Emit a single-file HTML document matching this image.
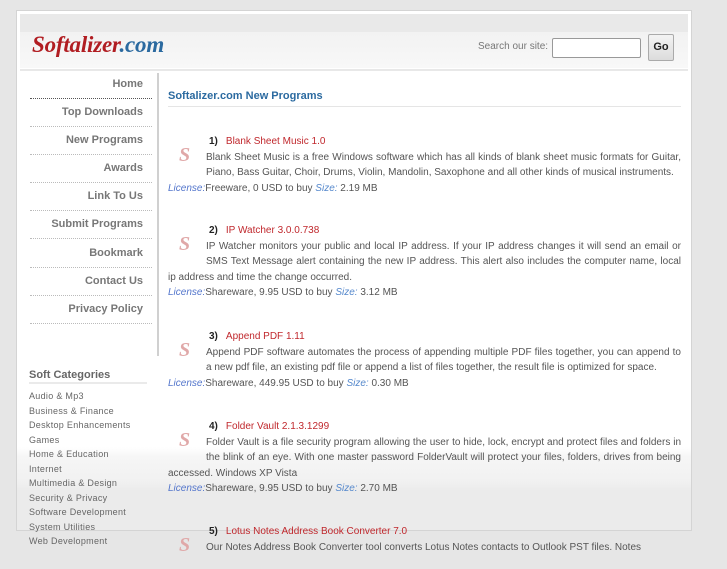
<!DOCTYPE html>
<html><head><meta charset="utf-8"><style>
*{margin:0;padding:0;box-sizing:border-box}
body{width:727px;height:545px;overflow:hidden;background:#e6e6e6;font-family:"Liberation Sans",sans-serif;position:relative}
#wrap{position:absolute;left:16px;top:10px;width:676px;height:521px;background:linear-gradient(#fff 0,#fff 436px,#f6f6f6 446px,#f1f1f1 470px,#ebebeb 480px,#ebebeb 100%);border:1px solid #d4d4d4}
#hdrtop{position:absolute;left:3px;top:3px;width:668px;height:18px;background:#e9e9e9}
#hdr{position:absolute;left:3px;top:21px;width:668px;height:36px;background:linear-gradient(#f2f2f2,#f8f8f8)}
#logo{position:absolute;left:15px;top:21px;font-family:"Liberation Serif",serif;font-weight:bold;font-style:italic;font-size:23px;color:#b11d22;letter-spacing:-0.2px}
#logo span{color:#2b6aa0}
#sl{position:absolute;left:461px;top:30px;font-size:10px;color:#777}
#si{position:absolute;left:535px;top:27px;width:89px;height:20px;border:1px solid #999;border-radius:2px;background:#fff}
#go{position:absolute;left:631px;top:23px;width:26px;height:27px;border:1px solid #aaa;border-radius:2px;background:linear-gradient(#f3f3f3,#dcdcdc);font-size:11px;font-weight:bold;color:#222;text-align:center;line-height:25px}
#hline{position:absolute;left:3px;top:58px;width:668px;height:2px;background:#e8e8e8}
#vline{position:absolute;left:140px;top:62px;width:2px;height:283px;background:#d0d0d0}
.nav{position:absolute;left:13px;width:122px;font-size:11px;font-weight:bold;color:#777;text-align:right;padding-right:9px;height:21px;border-bottom:1px dotted #bbb}
.nav.h{border-bottom:1px dotted #555}
#sc{position:absolute;left:12px;top:358px;width:118px;font-size:11px;font-weight:bold;color:#666;border-bottom:2px solid #eaeaea;padding-bottom:1px}
.cat{position:absolute;left:12px;font-size:9px;color:#666;letter-spacing:0.3px}
#title{position:absolute;left:151px;top:79px;width:513px;font-size:11px;font-weight:bold;color:#2b6aa0;border-bottom:1px solid #e5e5e5;padding-bottom:4px}
.it{position:absolute;left:151px;width:513px;font-size:10px;color:#555;line-height:15.6px;text-align:justify}
.it .S{float:left;width:38px;height:45px;font-family:"Liberation Serif",serif;font-style:italic;font-weight:bold;font-size:20px;color:#e0a8a8;padding:11px 0 0 11px;line-height:20px}
.it .t{color:#c0282d;text-align:left}
.it .t b{color:#222;margin:0 8px 0 3px}
.lic{font-style:italic;color:#5577cc}
.sz{font-style:italic;color:#5588cc}
</style></head><body>
<div id="wrap">
<div id="hdrtop"></div><div id="hdr"></div>
<div id="logo">Softalizer<span>.com</span></div>
<div id="sl">Search our site:</div><div id="si"></div><div id="go">Go</div>
<div id="hline"></div>
<div id="vline"></div>
<div class="nav h" style="top:67px">Home</div>
<div class="nav" style="top:95px">Top Downloads</div>
<div class="nav" style="top:123px">New Programs</div>
<div class="nav" style="top:151px">Awards</div>
<div class="nav" style="top:179px">Link To Us</div>
<div class="nav" style="top:207px">Submit Programs</div>
<div class="nav" style="top:236px">Bookmark</div>
<div class="nav" style="top:264px">Contact Us</div>
<div class="nav" style="top:292px">Privacy Policy</div>
<div id="sc">Soft Categories</div>
<div class="cat" style="top:380px">Audio &amp; Mp3</div>
<div class="cat" style="top:395px">Business &amp; Finance</div>
<div class="cat" style="top:409px">Desktop Enhancements</div>
<div class="cat" style="top:424px">Games</div>
<div class="cat" style="top:438px">Home &amp; Education</div>
<div class="cat" style="top:453px">Internet</div>
<div class="cat" style="top:467px">Multimedia &amp; Design</div>
<div class="cat" style="top:482px">Security &amp; Privacy</div>
<div class="cat" style="top:496px">Software Development</div>
<div class="cat" style="top:511px">System Utilities</div>
<div class="cat" style="top:525px">Web Development</div>
<div id="title">Softalizer.com New Programs</div>
<div class="it" style="top:123px"><div class="S">S</div><div class="t"><b>1)</b>Blank Sheet Music 1.0</div>Blank Sheet Music is a free Windows software which has all kinds of blank sheet music formats for Guitar, Piano, Bass Guitar, Choir, Drums, Violin, Mandolin, Saxophone and all other kinds of musical instruments.<br><span class="lic">License:</span>Freeware, 0 USD to buy <span class="sz">Size:</span> 2.19 MB</div>
<div class="it" style="top:212px"><div class="S">S</div><div class="t"><b>2)</b>IP Watcher 3.0.0.738</div>IP Watcher monitors your public and local IP address. If your IP address changes it will send an email or SMS Text Message alert containing the new IP address. This alert also includes the computer name, local ip address and time the change occurred.<br><span class="lic">License:</span>Shareware, 9.95 USD to buy <span class="sz">Size:</span> 3.12 MB</div>
<div class="it" style="top:318px"><div class="S">S</div><div class="t"><b>3)</b>Append PDF 1.11</div>Append PDF software automates the process of appending multiple PDF files together, you can append to a new pdf file, an existing pdf file or append a list of files together, the result file is optimized for space.<br><span class="lic">License:</span>Shareware, 449.95 USD to buy <span class="sz">Size:</span> 0.30 MB</div>
<div class="it" style="top:408px"><div class="S">S</div><div class="t"><b>4)</b>Folder Vault 2.1.3.1299</div>Folder Vault is a file security program allowing the user to hide, lock, encrypt and protect files and folders in the blink of an eye. With one master password FolderVault will protect your files, folders, drives from being accessed. Windows XP Vista<br><span class="lic">License:</span>Shareware, 9.95 USD to buy <span class="sz">Size:</span> 2.70 MB</div>
<div class="it" style="top:513px"><div class="S">S</div><div class="t"><b>5)</b>Lotus Notes Address Book Converter 7.0</div>Our Notes Address Book Converter tool converts Lotus Notes contacts to Outlook PST files. Notes</div>
</div>
</body></html>
